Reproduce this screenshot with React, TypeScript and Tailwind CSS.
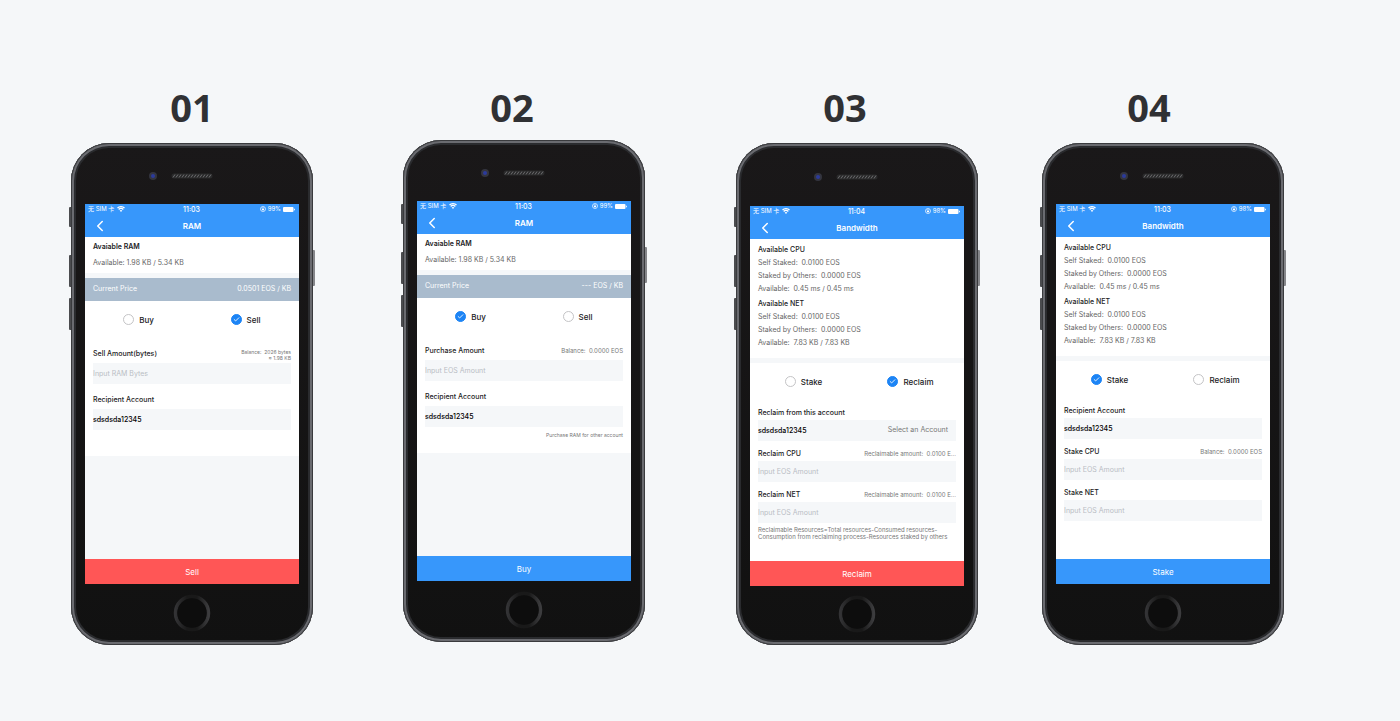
import React, { useState } from 'react';
import { Check, ChevronLeft } from 'lucide-react';

interface ResourceBlock {
  title: string;
  lines: string[];
}

interface FieldData {
  id: string;
  label: string;
  hint?: string[];
  tinyHint?: boolean;
  value?: string;
  placeholder?: string;
  action?: string;
}

interface ScreenData {
  no: string;
  noClass: string;
  bezelClass: string;
  title: string;
  time: string;
  battery: string;
  kind: 'ram' | 'bandwidth';
  resources: ResourceBlock[];
  price?: string;
  options: string[];
  selected: string;
  fields: FieldData[];
  note?: string;
  submit: string;
  submitClass: string;
}

const SCREENS: ScreenData[] = [
  {
    no: '01',
    noClass: 'h-[62px]',
    bezelClass: 'h-[61px]',
    title: 'RAM',
    time: '11:03',
    battery: '99%',
    kind: 'ram',
    resources: [{ title: 'Avaiable RAM', lines: ['Available: 1.98 KB / 5.34 KB'] }],
    price: '0.0501 EOS / KB',
    options: ['Buy', 'Sell'],
    selected: 'Sell',
    fields: [
      {
        id: 'amount',
        label: 'Sell Amount(bytes)',
        hint: ['Balance:  2026 bytes', '≈ 1.98 KB'],
        tinyHint: true,
        placeholder: 'Input RAM Bytes',
      },
      { id: 'recipient', label: 'Recipient Account', value: 'sdsdsda12345' },
    ],
    submit: 'Sell',
    submitClass: 'bg-[#ff5656]',
  },
  {
    no: '02',
    noClass: 'h-[59px] pr-6',
    bezelClass: 'h-[61px]',
    title: 'RAM',
    time: '11:03',
    battery: '99%',
    kind: 'ram',
    resources: [{ title: 'Avaiable RAM', lines: ['Available: 1.98 KB / 5.34 KB'] }],
    price: '--- EOS / KB',
    options: ['Buy', 'Sell'],
    selected: 'Buy',
    fields: [
      { id: 'amount', label: 'Purchase Amount', hint: ['Balance:  0.0000 EOS'], placeholder: 'Input EOS Amount' },
      { id: 'recipient', label: 'Recipient Account', value: 'sdsdsda12345' },
    ],
    note: 'Purchase RAM for other account',
    submit: 'Buy',
    submitClass: 'bg-[#3797fb]',
  },
  {
    no: '03',
    noClass: 'h-[62px] pr-6',
    bezelClass: 'h-[63px]',
    title: 'Bandwidth',
    time: '11:04',
    battery: '98%',
    kind: 'bandwidth',
    resources: [
      { title: 'Available CPU', lines: ['Self Staked:  0.0100 EOS', 'Staked by Others:  0.0000 EOS', 'Available:  0.45 ms / 0.45 ms'] },
      { title: 'Available NET', lines: ['Self Staked:  0.0100 EOS', 'Staked by Others:  0.0000 EOS', 'Available:  7.83 KB / 7.83 KB'] },
    ],
    options: ['Stake', 'Reclaim'],
    selected: 'Reclaim',
    fields: [
      { id: 'account', label: 'Reclaim from this account', value: 'sdsdsda12345', action: 'Select an Account' },
      { id: 'cpu', label: 'Reclaim CPU', hint: ['Reclaimable amount:  0.0100 E...'], placeholder: 'Input EOS Amount' },
      { id: 'net', label: 'Reclaim NET', hint: ['Reclaimable amount:  0.0100 E...'], placeholder: 'Input EOS Amount' },
    ],
    note: 'Reclaimable Resources=Total resources-Consumed resources-Consumption from reclaiming process-Resources staked by others',
    submit: 'Reclaim',
    submitClass: 'bg-[#ff5656]',
  },
  {
    no: '04',
    noClass: 'h-[62px] pr-7',
    bezelClass: 'h-[61px]',
    title: 'Bandwidth',
    time: '11:03',
    battery: '98%',
    kind: 'bandwidth',
    resources: [
      { title: 'Available CPU', lines: ['Self Staked:  0.0100 EOS', 'Staked by Others:  0.0000 EOS', 'Available:  0.45 ms / 0.45 ms'] },
      { title: 'Available NET', lines: ['Self Staked:  0.0100 EOS', 'Staked by Others:  0.0000 EOS', 'Available:  7.83 KB / 7.83 KB'] },
    ],
    options: ['Stake', 'Reclaim'],
    selected: 'Stake',
    fields: [
      { id: 'recipient', label: 'Recipient Account', value: 'sdsdsda12345' },
      { id: 'cpu', label: 'Stake CPU', hint: ['Balance:  0.0000 EOS'], placeholder: 'Input EOS Amount' },
      { id: 'net', label: 'Stake NET', placeholder: 'Input EOS Amount' },
    ],
    submit: 'Stake',
    submitClass: 'bg-[#3797fb]',
  },
];

const WifiIcon = () => (
  <svg viewBox="0 0 16 12" className="h-[6px] w-2" aria-hidden="true">
    <path d="M8 12 5.4 9.2a3.6 3.6 0 0 1 5.2 0Z" fill="#fff" />
    <path d="M3.4 6.9a6.5 6.5 0 0 1 9.2 0M1 4.1a10 10 0 0 1 14 0" fill="none" stroke="#fff" strokeWidth="2.5" />
  </svg>
);

const LockIcon = () => (
  <svg viewBox="0 0 12 12" className="h-[6px] w-[6px]" aria-hidden="true">
    <circle cx="6" cy="6" r="5" fill="none" stroke="#fff" strokeWidth="1.4" />
    <path d="M4 5.5h4v3H4Z" fill="#fff" />
    <path d="M4.7 5.5V4.4a1.3 1.3 0 0 1 2.6 0v1.1" fill="none" stroke="#fff" />
  </svg>
);

const BatteryIcon = () => (
  <svg viewBox="0 0 24 10" className="h-[5px] w-3" aria-hidden="true">
    <rect width="21" height="10" rx="2" fill="#fff" />
    <path d="M22.3 3v4a2 2 0 0 0 0-4Z" fill="#fff" />
  </svg>
);

const StatusBar = ({ time, battery }: { time: string; battery: string }) => (
  <div className="grid h-[10px] grid-cols-[1fr_auto_1fr] items-center pl-[3px] pr-1 text-[6px] leading-none text-white">
    <div className="flex items-center gap-[3px]">
      <span>无 SIM 卡</span>
      <WifiIcon />
    </div>
    <span className="text-[7px] font-medium">{time}</span>
    <div className="flex items-center justify-end gap-[2px]">
      <LockIcon />
      <span>{battery}</span>
      <BatteryIcon />
    </div>
  </div>
);

const Field = ({ field, prefix, roomy }: { field: FieldData; prefix: string; roomy: boolean }) => {
  const id = `${prefix}-${field.id}`;
  return (
    <div>
      <div className={roomy ? 'flex h-[14px] items-start justify-between' : 'flex h-3 items-start justify-between'}>
        <label htmlFor={id} className="text-[7px] leading-[9px] font-medium text-[#1c1c1e]">{field.label}</label>
        {field.hint && (
          <div className={field.tinyHint ? 'text-right text-[5px] leading-[6px] whitespace-pre text-[#777]' : 'text-right text-[6px] leading-[10px] whitespace-pre text-[#777]'}>
            {field.hint.map((line) => <p key={line}>{line}</p>)}
          </div>
        )}
      </div>
      <div className="flex h-[21px] items-center bg-[#f5f7f9]">
        <input
          id={id}
          type="text"
          defaultValue={field.value}
          placeholder={field.placeholder}
          className="h-full w-full min-w-0 flex-1 bg-transparent text-[7px] font-medium text-black outline-none placeholder:font-normal placeholder:text-[#b9bdc4]"
        />
        {field.action && <button type="button" className="pr-2 text-[7px] text-[#777]">{field.action}</button>}
      </div>
    </div>
  );
};

const AppScreen = ({ screen }: { screen: ScreenData }) => {
  const [selected, setSelected] = useState(screen.selected);
  const isRam = screen.kind === 'ram';

  return (
    <div className="flex h-[380px] flex-col bg-[#f5f7f9]">
      <header className="h-[33px] bg-[#3797fb] text-white">
        <StatusBar time={screen.time} battery={screen.battery} />
        <div className="grid h-[23px] grid-cols-[1fr_auto_1fr] items-center">
          <button type="button" aria-label="Back" className="w-fit pl-[6px]">
            <ChevronLeft size={18} strokeWidth={2} />
          </button>
          <h2 className="text-[8px] leading-none font-semibold">{screen.title}</h2>
        </div>
      </header>

      <section className={isRam ? 'h-9 bg-white px-2 pt-[5px]' : 'flex h-[119px] flex-col gap-[2px] bg-white px-2 pt-1'}>
        {screen.resources.map((block) => (
          <div key={block.title} className={isRam ? 'flex flex-col gap-[6px]' : 'flex flex-col'}>
            <h3 className={isRam ? 'text-[7px] leading-[10px] font-semibold text-[#1c1c1e]' : 'text-[7px] leading-[13px] font-medium text-[#1c1c1e]'}>{block.title}</h3>
            {block.lines.map((line) => (
              <p key={line} className={isRam ? 'text-[7px] leading-[10px] text-[#666]' : 'text-[7px] leading-[13px] whitespace-pre text-[#666]'}>{line}</p>
            ))}
          </div>
        ))}
      </section>

      {screen.price && (
        <div className="mt-[5px] flex h-[23px] shrink-0 items-center justify-between bg-[#a9bbcd] px-2 text-[7px] text-white">
          <span>Current Price</span>
          <span>{screen.price}</span>
        </div>
      )}

      <section className={isRam ? 'h-[155px] bg-white' : 'mt-[5px] flex-1 bg-white'}>
        <div className="grid h-[37px] grid-cols-2 items-center">
          {screen.options.map((option) => (
            <label key={option} className="flex items-center justify-center gap-[5px] text-[8px] leading-none font-medium text-[#1c1c1e]">
              <span className="grid place-items-center">
                <input
                  type="radio"
                  name={`mode-${screen.no}`}
                  checked={selected === option}
                  onChange={() => setSelected(option)}
                  className="col-start-1 row-start-1 size-[11px] appearance-none rounded-full border border-[#c4c4c6] checked:border-[#1c84f5] checked:bg-[#1c84f5]"
                />
                {selected === option && <Check size={7} strokeWidth={3} className="pointer-events-none col-start-1 row-start-1 text-white" />}
              </span>
              {option}
            </label>
          ))}
        </div>
        <div className={isRam ? 'flex flex-col gap-[11px] px-2 pt-[11px]' : 'flex flex-col gap-2 px-2 pt-2'}>
          {screen.fields.map((field) => <Field key={field.id} field={field} prefix={screen.no} roomy={isRam} />)}
        </div>
        {screen.note && (
          <p className={isRam ? 'px-2 pt-1 text-right text-[5px] leading-[8px] text-[#777]' : 'px-2 pt-[3px] text-[6px] leading-[7px] text-[#777]'}>{screen.note}</p>
        )}
      </section>

      <button type="submit" className={`mt-auto h-[25px] w-full shrink-0 text-[8px] text-white ${screen.submitClass}`}>
        {screen.submit}
      </button>
    </div>
  );
};

const Speaker = () => (
  <svg viewBox="0 0 42 6" className="h-[6px] w-[42px]" aria-hidden="true">
    <rect x="0.5" y="0.5" width="41" height="5" rx="2.5" fill="#2a2a2b" />
    <path
      d="M2 4.5 4 1.5M5 4.5 7 1.5M8 4.5l2-3M11 4.5l2-3M14 4.5l2-3M17 4.5l2-3M20 4.5l2-3M23 4.5l2-3M26 4.5l2-3M29 4.5l2-3M32 4.5l2-3M35 4.5l2-3M38 4.5l2-3"
      stroke="#6c6c6e"
    />
  </svg>
);

const HomeButton = () => (
  <svg viewBox="0 0 38 38" className="size-[38px]" aria-hidden="true">
    <defs>
      <linearGradient id="home-ring" x1="0" y1="0" x2="1" y2="0">
        <stop offset="0" stopColor="#333335" />
        <stop offset="0.35" stopColor="#191919" />
        <stop offset="0.65" stopColor="#191919" />
        <stop offset="1" stopColor="#3c3c3e" />
      </linearGradient>
    </defs>
    <circle cx="19" cy="19" r="16.5" fill="none" stroke="url(#home-ring)" strokeWidth="3.5" />
    <circle cx="19" cy="19" r="14.5" fill="#0d0d0d" />
  </svg>
);

const Phone = ({ screen }: { screen: ScreenData }) => (
  <div className="relative w-[242px]">
    <span className="absolute top-16 -left-[2px] h-5 w-1 rounded-l-[1px] bg-[#4b4c4f]" />
    <span className="absolute top-28 -left-[2px] h-8 w-1 rounded-l-[1px] bg-[#4b4c4f]" />
    <span className="absolute top-[155px] -left-[2px] h-8 w-1 rounded-l-[1px] bg-[#4b4c4f]" />
    <span className="absolute top-[107px] -right-[2px] h-9 w-1 rounded-r-[1px] bg-[#85868a]" />
    <div className="relative flex h-[502px] flex-col rounded-[38px] bg-linear-to-b from-[#1a1819] to-[#111] px-[14px] shadow-[inset_0_0_0_1px_#3a3b3e,inset_0_0_0_3px_#6a6b70,inset_0_0_0_5px_#2a2b2e]">
      <div className={`grid shrink-0 grid-cols-[1fr_auto_1fr] items-center pt-1 ${screen.bezelClass}`}>
        <span className="mr-[14px] grid size-2 place-items-center justify-self-end rounded-full bg-[#34353f]">
          <span className="size-1 rounded-full bg-[#2b3a9c]" />
        </span>
        <Speaker />
      </div>
      <AppScreen screen={screen} />
      <div className="flex flex-1 items-center justify-center pb-1">
        <HomeButton />
      </div>
    </div>
  </div>
);

const App: React.FC = () => {
  return (
    <main className="min-h-screen bg-[#f5f7f9] pt-[81px] pb-10 pl-[71px] font-['Inter','Noto_Sans_CJK_SC',sans-serif]">
      <div className="grid grid-cols-[minmax(260px,332fr)_minmax(260px,333fr)_minmax(260px,306fr)_minmax(260px,358fr)] items-start">
        {SCREENS.map((screen) => (
          <article key={screen.no}>
            <h1 className={`w-[242px] text-center font-['Noto_Sans',sans-serif] text-[38px] leading-[52px] font-bold text-[#303134] ${screen.noClass}`}>
              {screen.no}
            </h1>
            <Phone screen={screen} />
          </article>
        ))}
      </div>
    </main>
  );
};

export default App;
